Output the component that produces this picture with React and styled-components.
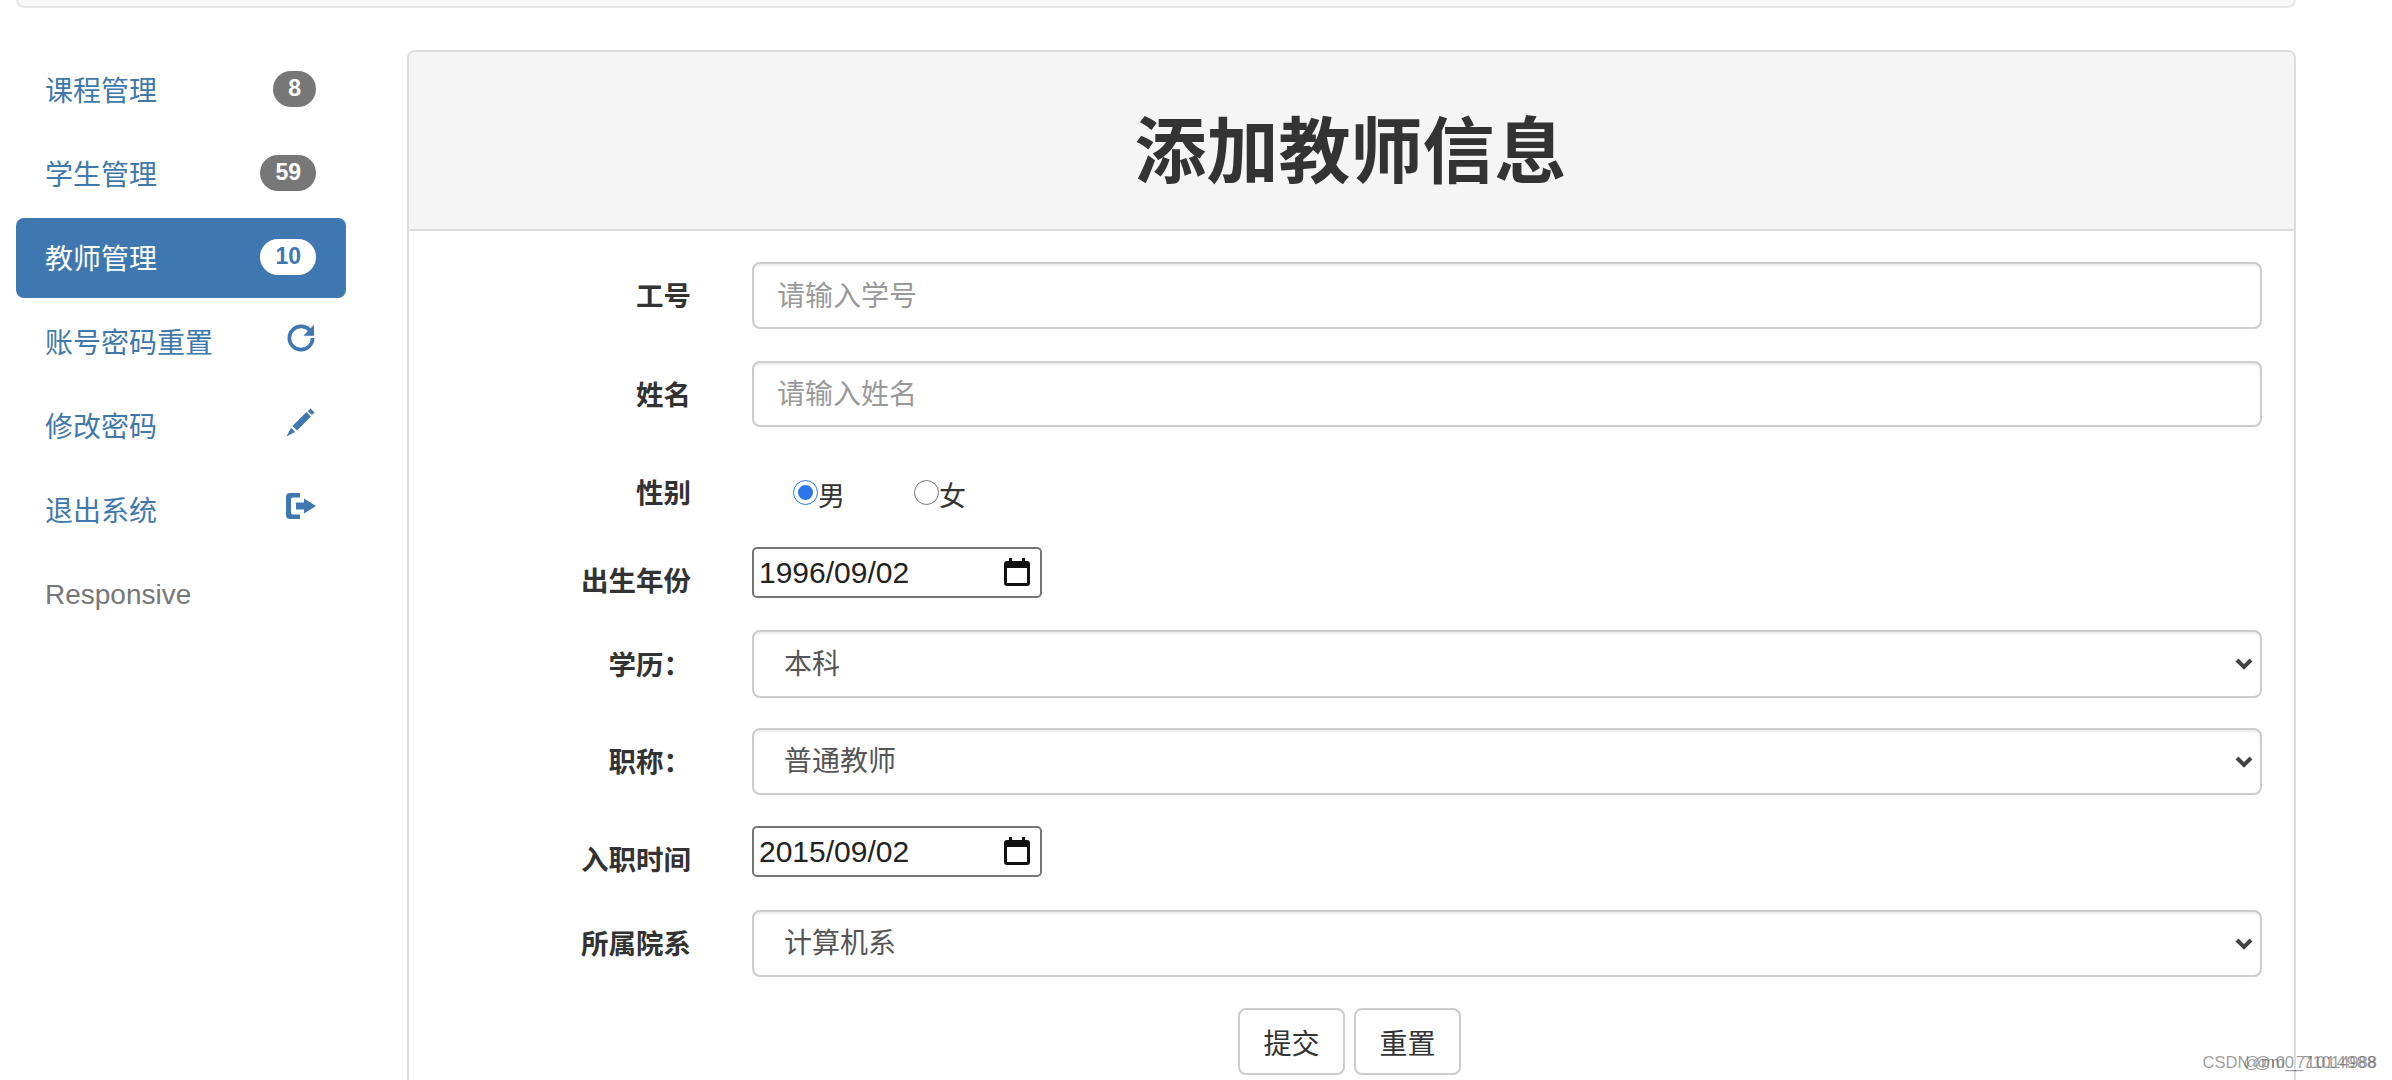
import React from 'react';
import styled, { createGlobalStyle } from 'styled-components';

const FONT = '"Liberation Sans", "Noto Sans CJK SC", sans-serif';

const GlobalStyle = createGlobalStyle`
  html, body {
    margin: 0;
    height: 1080px;
    overflow: hidden;
    background: #fff;
    font-family: ${FONT};
    color: #333;
  }
  * { box-sizing: border-box; }
`;

const Page = styled.div`
  position: relative;
  width: 2392px;
  height: 1080px;
  overflow: hidden;
  padding: 0 96px 0 16px;
`;

const TopBar = styled.div`
  height: 10px;
  margin-top: -2px;
  background: #f8f8f8;
  border: 2px solid #e7e7e7;
  border-top: none;
  border-radius: 0 0 8px 8px;
`;

const Layout = styled.div`
  display: flex;
  align-items: flex-start;
  margin-top: 42px;
`;

const Nav = styled.ul`
  list-style: none;
  width: 330px;
  margin: 0 61px 0 0;
  padding: 0;
  flex: none;
  display: flex;
  flex-direction: column;
  gap: 4px;
`;

const NavItem = styled.li`
  height: 80px;
  padding: ${(p) => (p.$muted ? '2px 29px 0' : '0 30px 3px 29px')};
  display: flex;
  align-items: center;
  justify-content: space-between;
  border-radius: 8px;
  font-size: 28px;
  background: ${(p) => (p.$active ? '#3f78b0' : 'transparent')};
  color: ${(p) => (p.$active ? '#fff' : p.$muted ? '#777' : '#3f78ab')};
`;

const Badge = styled.span`
  height: 36px;
  min-width: 42px;
  padding: 0 15px;
  border-radius: 18px;
  display: flex;
  align-items: center;
  justify-content: center;
  font-size: 23px;
  font-weight: 700;
  background: ${(p) => (p.$active ? '#fff' : '#777')};
  color: ${(p) => (p.$active ? '#3f78b0' : '#fff')};
`;

const Glyph = styled.svg`
  width: 30px;
  height: 30px;
  margin-bottom: 5px;
  fill: #3f78b0;
  flex: none;
`;

const Panel = styled.section`
  flex: 1;
  height: 1100px;
  border: 2px solid #ddd;
  border-radius: 8px;
  overflow: hidden;
`;

const PanelHeading = styled.header`
  height: 179px;
  padding: 22px 2px 0 0;
  background: #f5f5f5;
  border-bottom: 2px solid #ddd;
  display: flex;
  align-items: center;
  justify-content: center;
`;

const Title = styled.h1`
  margin: 0;
  font-size: 72px;
  font-weight: 700;
  line-height: 1;
  color: #333;
`;

const Form = styled.form`
  padding: 31px 32px 0 0;
`;

const Row = styled.div`
  display: flex;
  align-items: center;
  height: ${(p) => p.$height}px;
  margin-top: ${(p) => p.$gap || 0}px;
`;

const Label = styled.label`
  width: 282px;
  margin-right: 61px;
  flex: none;
  text-align: right;
  font-size: 27.5px;
  font-weight: 700;
  color: #333;
  padding-top: ${(p) => p.$drop || 0}px;
  padding-bottom: ${(p) => (p.$drop ? 0 : 3)}px;
`;

const TextInput = styled.input`
  flex: 1;
  height: 100%;
  padding: 2px 23px 0;
  border: 2px solid #ccc;
  border-radius: 8px;
  box-shadow: inset 0 2px 2px rgba(0, 0, 0, 0.075);
  outline: none;
  font-family: ${FONT};
  font-size: 28px;
  color: #555;
  &::placeholder { color: #999; opacity: 1; }
`;

const SelectWrap = styled.div`
  position: relative;
  flex: 1;
  height: 100%;
`;

const Select = styled.select`
  width: 100%;
  height: 100%;
  appearance: none;
  padding: 0 30px;
  border: 2px solid #ccc;
  border-radius: 8px;
  box-shadow: inset 0 2px 2px rgba(0, 0, 0, 0.075);
  background: #fff;
  outline: none;
  font-family: ${FONT};
  font-size: 28px;
  color: #555;
`;

const Chevron = styled.svg`
  position: absolute;
  right: 9px;
  top: 50%;
  width: 18px;
  height: 12px;
  margin-top: -6px;
  fill: none;
  stroke: #444;
  stroke-width: 4;
  pointer-events: none;
`;

const DateBox = styled.div`
  width: 290px;
  height: 100%;
  display: flex;
  align-items: center;
  justify-content: space-between;
  padding: 0 10px 0 5px;
  border: 2px solid #767676;
  border-radius: 5px;
  background: #fff;
  flex: none;
`;

const DateText = styled.input`
  width: 200px;
  border: none;
  outline: none;
  padding: 0;
  font-family: ${FONT};
  font-size: 30px;
  color: #222;
  background: transparent;
`;

const Calendar = styled.svg`
  width: 26px;
  height: 30px;
  margin-bottom: 2px;
  flex: none;
`;

const RadioGroup = styled.div`
  display: flex;
  align-items: center;
  padding-left: 41px;
`;

const RadioLabel = styled.label`
  display: flex;
  align-items: center;
  width: 121px;
  font-size: 27px;
  color: #333;
`;

const RadioText = styled.span`
  padding-top: 5px;
`;

const Radio = styled.input`
  width: 25px;
  height: 25px;
  margin: 0;
  accent-color: #2a76e8;
`;

const Actions = styled.div`
  display: flex;
  justify-content: center;
  gap: 9px;
  margin-top: 31px;
  margin-left: 28px;
`;

const Button = styled.button`
  width: 107px;
  height: 67px;
  border: 2px solid #ccc;
  border-radius: 8px;
  background: #fff;
  font-family: ${FONT};
  font-size: 28px;
  color: #333;
`;

const Watermark = styled.span`
  position: absolute;
  top: 1053px;
  right: 15px;
  font-size: 16.6px;
  line-height: 20px;
  letter-spacing: ${(p) => p.$spacing}px;
  color: rgba(90, 90, 90, 0.6);
  white-space: nowrap;
`;

const navItems = [
  { name: '课程管理', badge: 8 },
  { name: '学生管理', badge: 59 },
  { name: '教师管理', badge: 10, active: true },
  {
    name: '账号密码重置',
    icon: 'M15 1.500A13.500 13.500 0 1 0 28.500 15h-3.700A9.800 9.800 0 1 1 15 5.200c2.600 0 5 1 6.800 2.700L17.500 12.800H28V1.800l-3.400 3.400A13.500 13.500 0 0 0 15 1.500z',
  },
  {
    name: '修改密码',
    icon: 'M24.500 1.500l4 4-2.600 2.600-4-4zM20.400 5.100l4.500 4.500L11 23.500 6.500 19zM5 20.800l4.200 4.200L0.500 29.500z',
  },
  {
    name: '退出系统',
    icon: 'M4 2h10v4.500H7A2 2 0 0 0 5 8.500v13a2 2 0 0 0 2 2h7V28H4a4 4 0 0 1-4-4V6a4 4 0 0 1 4-4zM18 7.500L30 15 18 22.500V18.500H10v-7h8z',
  },
  { name: 'Responsive', muted: true },
];

const DateField = ({ value }) => (
  <DateBox>
    <DateText type="text" defaultValue={value} readOnly />
    <Calendar viewBox="0 0 26 30">
      <path d="M5 1h3v3h10V1h3v3h2a3 3 0 0 1 3 3v19a3 3 0 0 1-3 3H3a3 3 0 0 1-3-3V7a3 3 0 0 1 3-3h2zM3 11v15h20V11z" fill="#111" />
    </Calendar>
  </DateBox>
);

const SelectField = ({ value }) => (
  <SelectWrap>
    <Select defaultValue={value}>
      <option>{value}</option>
    </Select>
    <Chevron viewBox="0 0 18 12">
      <path d="M2 2l7 7 7-7" />
    </Chevron>
  </SelectWrap>
);

export default function App() {
  return (
    <Page>
      <GlobalStyle />
      <TopBar />
      <Layout>
        <Nav>
          {navItems.map((item) => (
            <NavItem key={item.name} $active={item.active} $muted={item.muted}>
              {item.name}
              {item.badge !== undefined && <Badge $active={item.active}>{item.badge}</Badge>}
              {item.icon && (
                <Glyph viewBox="0 0 30 30">
                  <path d={item.icon} />
                </Glyph>
              )}
            </NavItem>
          ))}
        </Nav>
        <Panel>
          <PanelHeading>
            <Title>添加教师信息</Title>
          </PanelHeading>
          <Form>
            <Row $height={67}>
              <Label>工号</Label>
              <TextInput placeholder="请输入学号" />
            </Row>
            <Row $height={66} $gap={32}>
              <Label>姓名</Label>
              <TextInput placeholder="请输入姓名" />
            </Row>
            <Row $height={60} $gap={35}>
              <Label>性别</Label>
              <RadioGroup>
                <RadioLabel>
                  <Radio type="radio" name="sex" defaultChecked />
                  <RadioText>男</RadioText>
                </RadioLabel>
                <RadioLabel>
                  <Radio type="radio" name="sex" />
                  <RadioText>女</RadioText>
                </RadioLabel>
              </RadioGroup>
            </Row>
            <Row $height={51} $gap={25}>
              <Label $drop={13}>出生年份</Label>
              <DateField value="1996/09/02" />
            </Row>
            <Row $height={68} $gap={32}>
              <Label>学历：</Label>
              <SelectField value="本科" />
            </Row>
            <Row $height={67} $gap={30}>
              <Label>职称：</Label>
              <SelectField value="普通教师" />
            </Row>
            <Row $height={51} $gap={31}>
              <Label $drop={13}>入职时间</Label>
              <DateField value="2015/09/02" />
            </Row>
            <Row $height={67} $gap={33}>
              <Label>所属院系</Label>
              <SelectField value="计算机系" />
            </Row>
            <Actions>
              <Button type="button">提交</Button>
              <Button type="button">重置</Button>
            </Actions>
          </Form>
        </Panel>
      </Layout>
      <Watermark $spacing={0}>CSDN @m0_71014988</Watermark>
      <Watermark $spacing={0.9}>@m0_71014988</Watermark>
    </Page>
  );
}
